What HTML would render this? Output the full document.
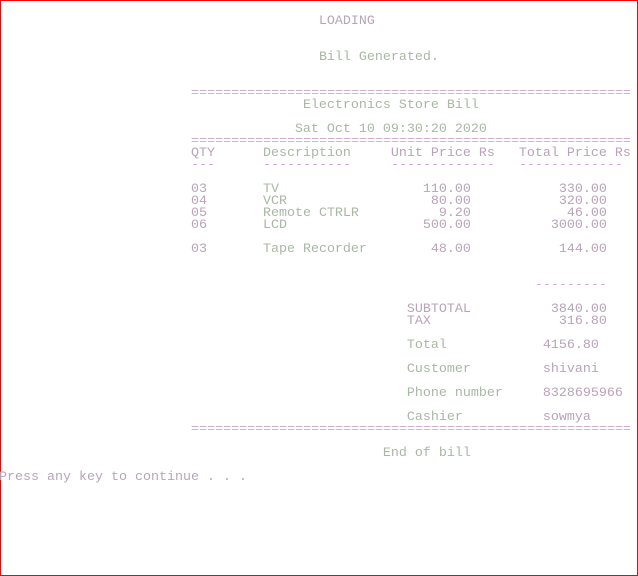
<!DOCTYPE html>
<html><head><meta charset="utf-8"><style>
html,body{margin:0;padding:0;background:#fff;}
body{width:638px;height:576px;box-sizing:border-box;border:1px solid #f00;position:relative;overflow:hidden;}
pre{position:absolute;left:-2px;top:15px;margin:0;font-family:"Liberation Mono",monospace;font-size:13.33px;line-height:12px;color:#b8a4b8;letter-spacing:0;}
.g{color:#a8b8a4;}
.p{color:#d0a8d0;}
</style></head><body><pre>                                        LOADING


                                        <span class="g">Bill Generated.</span>


                        <span class="p">=======================================================</span>
                                      <span class="g">Electronics Store Bill</span>

                                     <span class="g">Sat Oct 10 09:30:20 2020</span>
                        <span class="p">=======================================================</span>
                        QTY      <span class="g">Description</span>     Unit Price Rs   Total Price Rs
                        <span class="p">---</span>      <span class="p">-----------</span>     <span class="p">-------------</span>   <span class="p">-------------</span>

                        03       <span class="g">TV</span>                  110.00           330.00
                        04       <span class="g">VCR</span>                  80.00           320.00
                        05       <span class="g">Remote CTRLR</span>          9.20            46.00
                        06       <span class="g">LCD</span>                 500.00          3000.00

                        03       <span class="g">Tape Recorder</span>        48.00           144.00


                                                                   <span class="p">---------</span>

                                                   SUBTOTAL          3840.00
                                                   TAX                316.80

                                                   <span class="g">Total</span>            4156.80

                                                   <span class="g">Customer</span>         shivani

                                                   <span class="g">Phone number</span>     8328695966

                                                   <span class="g">Cashier</span>          sowmya
                        <span class="p">=======================================================</span>

                                                <span class="g">End of bill</span>

Press any key to continue . . .</pre></body></html>
